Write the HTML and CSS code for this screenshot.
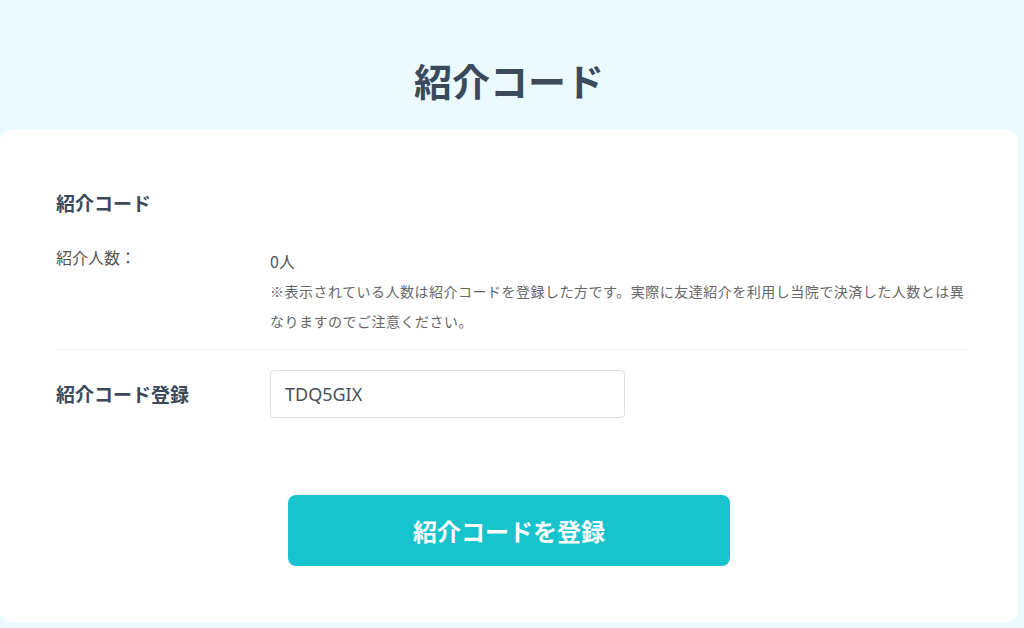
FILE: index.html
```html
<!DOCTYPE html>
<html lang="ja">
<head>
  <meta charset="UTF-8">
  <meta name="viewport" content="width=device-width, initial-scale=1.0">
  <title>紹介コード</title>
  <link rel="stylesheet" href="styles.css">
</head>
<body>
  <div class="page-header">
    <h1>紹介コード</h1>
  </div>

  <div class="card">
    <h2>紹介コード</h2>

    <div class="row row-count">
      <div class="label">紹介人数：</div>
      <div class="value">
        <div class="count">0人</div>
        <p class="note">※表示されている人数は紹介コードを登録した方です。実際に友達紹介を利用し当院で決済した人数とは異なりますのでご注意ください。</p>
      </div>
    </div>

    <div class="row row-input">
      <div class="label label-strong">紹介コード登録</div>
      <div class="value">
        <input type="text" class="code-input" value="TDQ5GIX">
      </div>
    </div>

    <div class="actions">
      <button type="button" class="btn-submit">紹介コードを登録</button>
    </div>
  </div>
</body>
</html>
```

FILE: styles.css
```css
/* Global Styles */
body {
  font-family: "Noto Sans CJK JP", "Noto Sans", sans-serif;
  background-color: #eafaff;
  margin: 0;
  padding: 0;
  color: #555;
}

/* Header */
.page-header {
  height: 130px;
  box-sizing: border-box;
  padding-top: 53px;
  text-align: center;
}

.page-header h1 {
  margin: 0;
  font-size: 38px;
  line-height: 53px;
  font-weight: bold;
  color: #3b4a5a;
  padding-right: 6px;
}

/* Card */
.card {
  width: 1018px;
  box-sizing: border-box;
  background-color: #ffffff;
  border-radius: 12px;
  padding: 60px 50px 56px 56px;
}

.card h2 {
  margin: 0 0 30px;
  font-size: 19px;
  line-height: 26px;
  font-weight: bold;
  color: #3b4a5a;
}

/* Rows */
.row {
  display: flex;
}

.row .label {
  width: 214px;
  flex-shrink: 0;
  font-size: 16px;
  line-height: 22px;
  color: #555;
}

.row .value {
  flex: 1;
}

.row-count {
  padding-bottom: 13px;
  border-bottom: 1px solid #f0f0f0;
}

.count {
  font-size: 16px;
  line-height: 30px;
  color: #555;
}

.note {
  margin: 0;
  font-size: 14px;
  letter-spacing: 0.5px;
  line-height: 30px;
  color: #666;
}

.row-input {
  margin-top: 20px;
  align-items: center;
}

.label-strong {
  font-size: 19px !important;
  font-weight: bold;
  color: #3b4a5a !important;
}

.code-input {
  width: 355px;
  height: 48px;
  box-sizing: border-box;
  border: 1px solid #dedede;
  border-radius: 4px;
  padding: 0 14px;
  font-family: "Noto Sans", "Noto Sans CJK JP", sans-serif;
  font-size: 18px;
  color: #4a4f57;
  outline: none;
}

/* Button */
.actions {
  margin-top: 77px;
  padding-left: 232px;
}

.btn-submit {
  width: 442px;
  height: 71px;
  border: none;
  border-radius: 8px;
  background-color: #17c3cc;
  color: #ffffff;
  font-family: "Noto Sans CJK JP", sans-serif;
  font-size: 24px;
  font-weight: bold;
  cursor: pointer;
}
```
